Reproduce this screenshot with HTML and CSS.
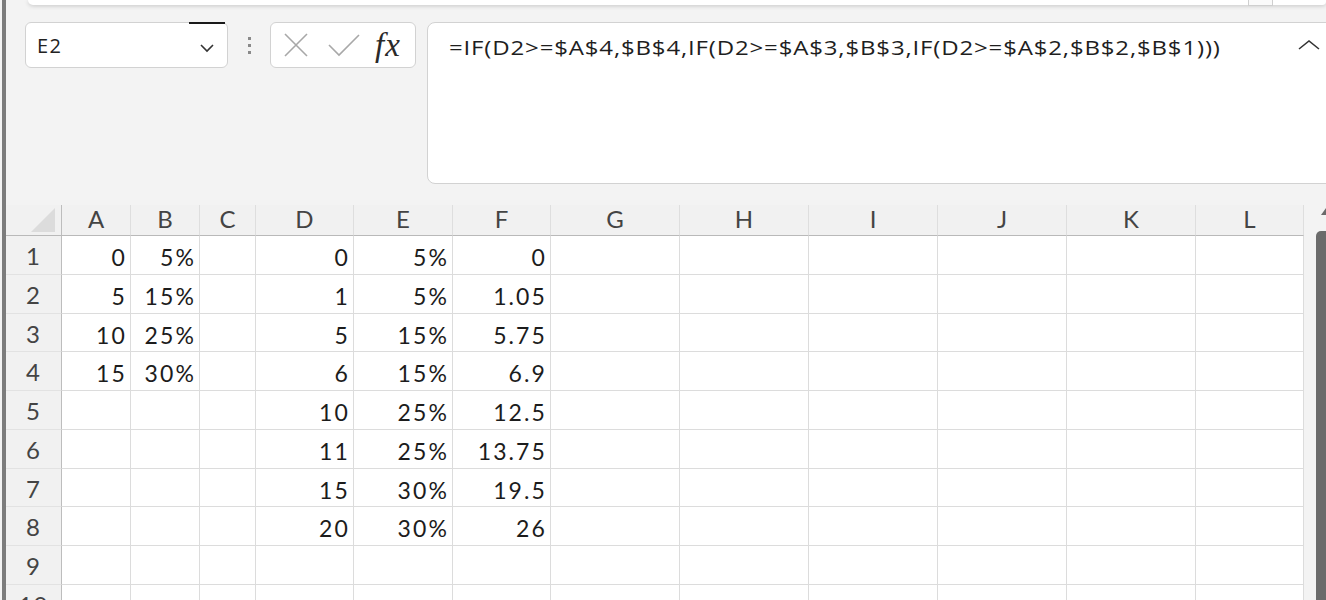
FILE: index.html
```html
<!DOCTYPE html>
<html lang="en">
<head>
    <meta charset="UTF-8">
    <meta name="viewport" content="width=device-width, initial-scale=1.0">
    <title>Sheet1 - Formula bar</title>
    <link rel="stylesheet" href="styles.css">
</head>
<body>
<div class="window">

    <!-- bottom edge of the ribbon -->
    <div class="ribbon-edge">
        <span class="ribbon-box"></span>
    </div>

    <!-- Formula bar -->
    <div class="formula-bar">
        <div class="name-box">
            <span class="name">E2</span>
            <span class="name-handle"></span>
            <svg class="chevron" width="16" height="10" viewBox="0 0 16 10">
                <path d="M2 2 L8 8 L14 2" fill="none" stroke="#333" stroke-width="1.6"/>
            </svg>
        </div>
        <div class="grip">
            <span></span><span></span><span></span>
        </div>
        <div class="fx-box">
            <svg width="26" height="26" viewBox="0 0 26 26">
                <path d="M2 2 L24 24 M24 2 L2 24" stroke="#a8a8a8" stroke-width="1.6" fill="none"/>
            </svg>
            <svg width="34" height="24" viewBox="0 0 34 24">
                <path d="M2 12 L12 22 L32 2" stroke="#a8a8a8" stroke-width="1.6" fill="none"/>
            </svg>
            <span class="fx">fx</span>
        </div>
        <div class="formula-input">
            <span class="formula">=IF(D2&gt;=$A$4,$B$4,IF(D2&gt;=$A$3,$B$3,IF(D2&gt;=$A$2,$B$2,$B$1)))</span>
            <svg class="collapse" width="24" height="12" viewBox="0 0 24 12">
                <path d="M2 10 L12 2 L22 10" fill="none" stroke="#333" stroke-width="1.6"/>
            </svg>
        </div>
    </div>

    <!-- Worksheet -->
    <div class="sheet">
        <div class="grid">
            <div class="row head">
                <div class="corner"><span></span></div>
                <div>A</div><div>B</div><div>C</div><div>D</div><div>E</div><div>F</div>
                <div>G</div><div>H</div><div>I</div><div>J</div><div>K</div><div>L</div>
            </div>
            <div class="row">
                <div class="num">1</div>
                <div>0</div><div>5%</div><div></div><div>0</div><div>5%</div><div>0</div>
                <div></div><div></div><div></div><div></div><div></div><div></div>
            </div>
            <div class="row">
                <div class="num">2</div>
                <div>5</div><div>15%</div><div></div><div>1</div><div>5%</div><div>1.05</div>
                <div></div><div></div><div></div><div></div><div></div><div></div>
            </div>
            <div class="row">
                <div class="num">3</div>
                <div>10</div><div>25%</div><div></div><div>5</div><div>15%</div><div>5.75</div>
                <div></div><div></div><div></div><div></div><div></div><div></div>
            </div>
            <div class="row">
                <div class="num">4</div>
                <div>15</div><div>30%</div><div></div><div>6</div><div>15%</div><div>6.9</div>
                <div></div><div></div><div></div><div></div><div></div><div></div>
            </div>
            <div class="row">
                <div class="num">5</div>
                <div></div><div></div><div></div><div>10</div><div>25%</div><div>12.5</div>
                <div></div><div></div><div></div><div></div><div></div><div></div>
            </div>
            <div class="row">
                <div class="num">6</div>
                <div></div><div></div><div></div><div>11</div><div>25%</div><div>13.75</div>
                <div></div><div></div><div></div><div></div><div></div><div></div>
            </div>
            <div class="row">
                <div class="num">7</div>
                <div></div><div></div><div></div><div>15</div><div>30%</div><div>19.5</div>
                <div></div><div></div><div></div><div></div><div></div><div></div>
            </div>
            <div class="row">
                <div class="num">8</div>
                <div></div><div></div><div></div><div>20</div><div>30%</div><div>26</div>
                <div></div><div></div><div></div><div></div><div></div><div></div>
            </div>
            <div class="row">
                <div class="num">9</div>
                <div></div><div></div><div></div><div></div><div></div><div></div>
                <div></div><div></div><div></div><div></div><div></div><div></div>
            </div>
            <div class="row">
                <div class="num">10</div>
                <div></div><div></div><div></div><div></div><div></div><div></div>
                <div></div><div></div><div></div><div></div><div></div><div></div>
            </div>
        </div>

        <div class="vscroll">
            <span class="arrow"></span>
            <span class="thumb"></span>
        </div>
    </div>
</div>
</body>
</html>
```

FILE: styles.css
```css
body {
    margin: 0;
    padding-left: 2px;
    background: #f3f3f3;
    font-family: "Open Sans", sans-serif;
    overflow: hidden;
}

.window {
    border-left: 4px solid #7c7c7c;
    height: 600px;
    overflow: hidden;
}

/* ribbon edge */
.ribbon-edge {
    position: relative;
    height: 5px;
    margin-left: 22px;
    background: #fff;
    border-radius: 0 0 6px 8px;
    box-shadow: 0 1px 4px rgba(0, 0, 0, 0.18);
}

.ribbon-box {
    position: absolute;
    left: 1220px;
    top: -2px;
    width: 23px;
    height: 6px;
    border: 1px solid #cfcfcf;
    background: #fafafa;
}

/* formula bar */
.formula-bar {
    display: flex;
    align-items: flex-start;
    margin-top: 17px;
    padding-left: 19px;
}

.name-box {
    position: relative;
    display: flex;
    align-items: center;
    justify-content: space-between;
    width: 203px;
    height: 46px;
    box-sizing: border-box;
    padding: 0 12px 0 11px;
    background: #fff;
    border: 1px solid #d2d2d2;
    border-radius: 6px;
}

.name {
    font-size: 20px;
    letter-spacing: 1.5px;
    color: #222;
}

.name-handle {
    position: absolute;
    top: -1px;
    right: 2px;
    width: 36px;
    height: 2px;
    background: #1a1a1a;
}

.chevron {
    margin-top: 6px;
}

.grip {
    display: flex;
    flex-direction: column;
    gap: 4px;
    width: 42px;
    align-items: center;
    padding-top: 15px;
}

.grip span {
    width: 3px;
    height: 3px;
    background: #8a8a8a;
}

.fx-box {
    display: flex;
    align-items: center;
    gap: 18px;
    width: 146px;
    height: 46px;
    box-sizing: border-box;
    padding-left: 12px;
    background: #fff;
    border: 1px solid #d2d2d2;
    border-radius: 6px;
}

.fx {
    font-family: "Liberation Serif", serif;
    font-style: italic;
    font-size: 33px;
    color: #2a2a2a;
    margin-left: -4px;
    letter-spacing: 1px;
}

.formula-input {
    display: flex;
    justify-content: space-between;
    align-items: flex-start;
    flex: 1;
    height: 162px;
    margin-left: 11px;
    margin-right: -12px;
    box-sizing: border-box;
    padding: 11px 16px 0 21px;
    background: #fff;
    border: 1px solid #d2d2d2;
    border-radius: 8px;
}

/* the screenshot is stretched sideways, so the formula text is too */
.formula {
    display: inline-block;
    font-size: 20px;
    color: #1e1e1e;
    letter-spacing: 0.7px;
    transform: scaleX(1.2);
    transform-origin: left center;
}

.collapse {
    margin-top: 5px;
    margin-right: 0;
}

/* worksheet */
.sheet {
    display: flex;
    margin-top: 21px;
}

.grid {
    width: 1298px;
    font-family: Lato, sans-serif;
    font-size: 23px;
    color: #1c1c1c;
}

.row {
    display: grid;
    grid-template-columns: 56px 69px 69px 56px 98px 99px 98px 129px 129px 129px 129px 129px 108px;
    height: 38.75px;
}

.row > div {
    box-sizing: border-box;
    background: #fff;
    border-right: 1px solid #dcdcdc;
    border-bottom: 1px solid #dcdcdc;
    text-align: right;
    padding: 4px 3px 0 0;
    line-height: 34px;
    letter-spacing: 2.1px;
    white-space: nowrap;
    overflow: hidden;
}

.row > .num {
    background: #f1f1f1;
    color: #444;
    text-align: center;
    padding: 3px 0 0;
    font-size: 24px;
    letter-spacing: 1px;
    border-right: 1px solid #bdbdbd;
    border-bottom: 1px solid #e2e2e2;
}

.row.head {
    height: 31px;
}

.row.head > div {
    background: #f1f1f1;
    color: #444;
    text-align: center;
    padding: 0;
    font-size: 24px;
    letter-spacing: 0;
    line-height: 28px;
    border-right: 1px solid #dedede;
    border-bottom: 1px solid #b9b9b9;
}

.row.head > .corner {
    position: relative;
    border-right: 1px solid #bdbdbd;
}

.corner span {
    position: absolute;
    right: 6px;
    bottom: 3px;
    width: 0;
    height: 0;
    border-left: 24px solid transparent;
    border-bottom: 24px solid #dcdcdc;
}

.vscroll {
    display: flex;
    flex-direction: column;
    align-items: flex-end;
    flex: 1;
}

.vscroll .arrow {
    width: 0;
    height: 0;
    margin-top: 3px;
    border-left: 5px solid transparent;
    border-bottom: 7px solid #6b6b6b;
}

.vscroll .thumb {
    width: 10px;
    height: 400px;
    margin-top: 16px;
    background: #6b6b6b;
    border-radius: 5px 0 0 0;
}
```
